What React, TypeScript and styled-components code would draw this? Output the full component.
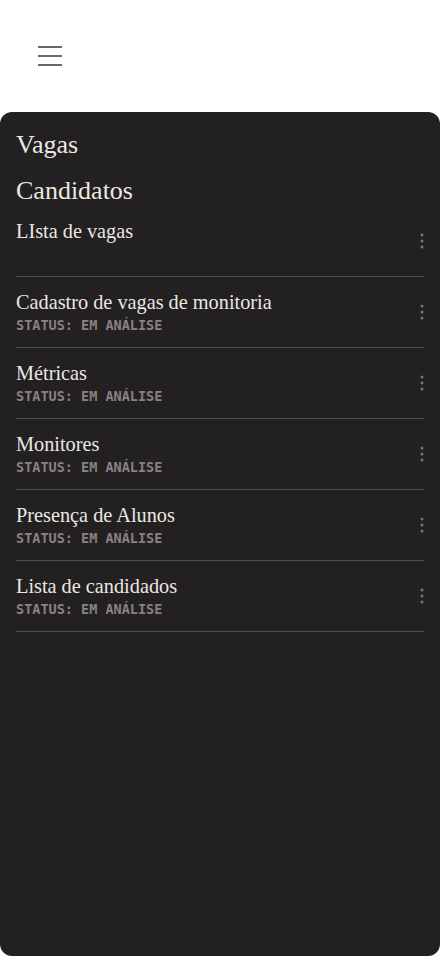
import styled, { createGlobalStyle } from "styled-components"

const GlobalStyle = createGlobalStyle`
  html, body {
    margin: 0;
    padding: 0;
    background: #ffffff;
  }
  * {
    box-sizing: border-box;
  }
`

const Page = styled.div`
  min-height: 956px;
  display: flex;
  flex-direction: column;
`

const TopBar = styled.header`
  height: 112px;
  display: flex;
  align-items: center;
  padding: 0 0 0 38px;
`

const MenuButton = styled.button`
  width: 24px;
  height: 20px;
  padding: 0;
  border: 0;
  background: none;
  display: flex;
  flex-direction: column;
  justify-content: space-between;
  cursor: pointer;
  margin-bottom: 1px;

  span {
    display: block;
    height: 2px;
    width: 24px;
    background: #6b6566;
  }
`

const Panel = styled.main`
  flex: 1;
  background: #232021;
  border-radius: 12px;
  padding: 18px 16px 0;
  display: flex;
  flex-direction: column;
`

const Heading = styled.h2`
  margin: 0 0 16px;
  font-family: "Liberation Serif", "DejaVu Serif", serif;
  font-weight: 400;
  font-size: 26px;
  line-height: 30px;
  color: #ece7e1;

  &:last-of-type {
    margin-bottom: 0;
  }
`

const List = styled.ul`
  list-style: none;
  margin: 0;
  padding: 0;
`

const Row = styled.li`
  min-height: 71px;
  padding: 13px 0 14px;
  border-bottom: 1px solid #524d4e;
  display: flex;
  align-items: center;
  justify-content: space-between;
`

const RowText = styled.div`
  align-self: flex-start;
  display: flex;
  flex-direction: column;
  gap: 3px;
`

const Title = styled.span`
  font-family: "Liberation Serif", "DejaVu Serif", serif;
  font-size: 20.3px;
  line-height: 24px;
  color: #ece7e1;
`

const Status = styled.span`
  font-family: "DejaVu Sans Mono", "Liberation Mono", monospace;
  font-weight: 700;
  font-size: 13.5px;
  line-height: 16px;
  color: #8a8184;
`

const MoreButton = styled.button`
  width: 4px;
  height: 16px;
  padding: 0;
  border: 0;
  background: none;
  display: flex;
  cursor: pointer;
`

const Dots = () => (
  <svg width="4" height="16" viewBox="0 0 4 16" fill="#7a7374">
    <circle cx="2" cy="2" r="1.5" />
    <circle cx="2" cy="8" r="1.5" />
    <circle cx="2" cy="14" r="1.5" />
  </svg>
)

const items = [
  { title: "LIsta de vagas", status: "" },
  { title: "Cadastro de vagas de monitoria", status: "STATUS: EM ANÁLISE" },
  { title: "Métricas", status: "STATUS: EM ANÁLISE" },
  { title: "Monitores", status: "STATUS: EM ANÁLISE" },
  { title: "Presença de Alunos", status: "STATUS: EM ANÁLISE" },
  { title: "Lista de candidados", status: "STATUS: EM ANÁLISE" },
]

export default function App() {
  return (
    <Page>
      <GlobalStyle />
      <TopBar>
        <MenuButton aria-label="Menu">
          <span />
          <span />
          <span />
        </MenuButton>
      </TopBar>
      <Panel>
        <Heading>Vagas</Heading>
        <Heading>Candidatos</Heading>
        <List>
          {items.map((item) => (
            <Row key={item.title}>
              <RowText>
                <Title>{item.title}</Title>
                {item.status && <Status>{item.status}</Status>}
              </RowText>
              <MoreButton aria-label="Mais opções">
                <Dots />
              </MoreButton>
            </Row>
          ))}
        </List>
      </Panel>
    </Page>
  )
}
